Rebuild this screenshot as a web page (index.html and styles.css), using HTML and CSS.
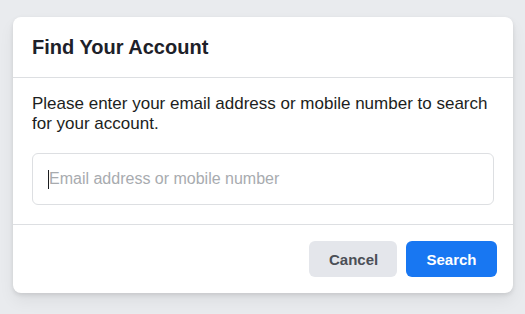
FILE: index.html
```html
<!DOCTYPE html>
<html>
<head>
<meta charset="utf-8">
<link rel="stylesheet" href="styles.css">
</head>
<body>
<div class="card">
  <div class="card-header"><h2 class="title">Find Your Account</h2></div>
  <div class="card-body">
    <p class="intro">Please enter your email address or mobile number to search for your account.</p>
    <div class="field"><span class="caret"></span><input class="input" type="text" placeholder="Email address or mobile number"></div>
  </div>
  <div class="card-footer">
    <button class="btn btn-cancel">Cancel</button>
    <button class="btn btn-search">Search</button>
  </div>
</div>
</body>
</html>
```
FILE: styles.css
```css
html, body { margin: 0; padding: 0; }
body {
  background: #e9ebee;
  font-family: "Liberation Sans", Arial, sans-serif;
  padding: 17px 0 0 13px;
  height: 314px;
  box-sizing: border-box;
}
.card {
  width: 500px;
  background: #fff;
  border-radius: 8px;
  box-shadow: 0 2px 4px rgba(0,0,0,.1), 0 8px 16px rgba(0,0,0,.06);
}
.card-header {
  height: 60px;
  display: flex;
  align-items: center;
  padding: 0 19px;
  border-bottom: 1px solid #dddfe2;
}
.title {
  margin: 0;
  font-size: 20px;
  font-weight: bold;
  color: #1d2129;
}
.card-body {
  padding: 16px 19px 19px;
}
.intro {
  margin: 0 0 19px;
  font-size: 17px;
  line-height: 20px;
  color: #1c1e21;
}
.field { position: relative; }
.input {
  display: block;
  width: 100%;
  box-sizing: border-box;
  height: 52px;
  border: 1px solid #dddfe2;
  border-radius: 6px;
  padding: 0 16px;
  font-family: inherit;
  font-size: 16px;
  color: #1c1e21;
  outline: none;
}
.input::placeholder { color: #a8abaf; }
.caret {
  position: absolute;
  left: 16px;
  top: 17px;
  width: 1px;
  height: 19px;
  background: #1c1e21;
}
.card-footer {
  border-top: 1px solid #dddfe2;
  padding: 16px;
  display: flex;
  justify-content: flex-end;
  gap: 9px;
}
.btn {
  height: 36px;
  border: none;
  border-radius: 6px;
  font-family: inherit;
  font-size: 15px;
  font-weight: bold;
  padding: 0 20px;
}
.btn-cancel { background: #e4e6eb; color: #4b4f56; width: 88px; }
.btn-search { background: #1877f2; color: #fff; width: 91px; }
```
